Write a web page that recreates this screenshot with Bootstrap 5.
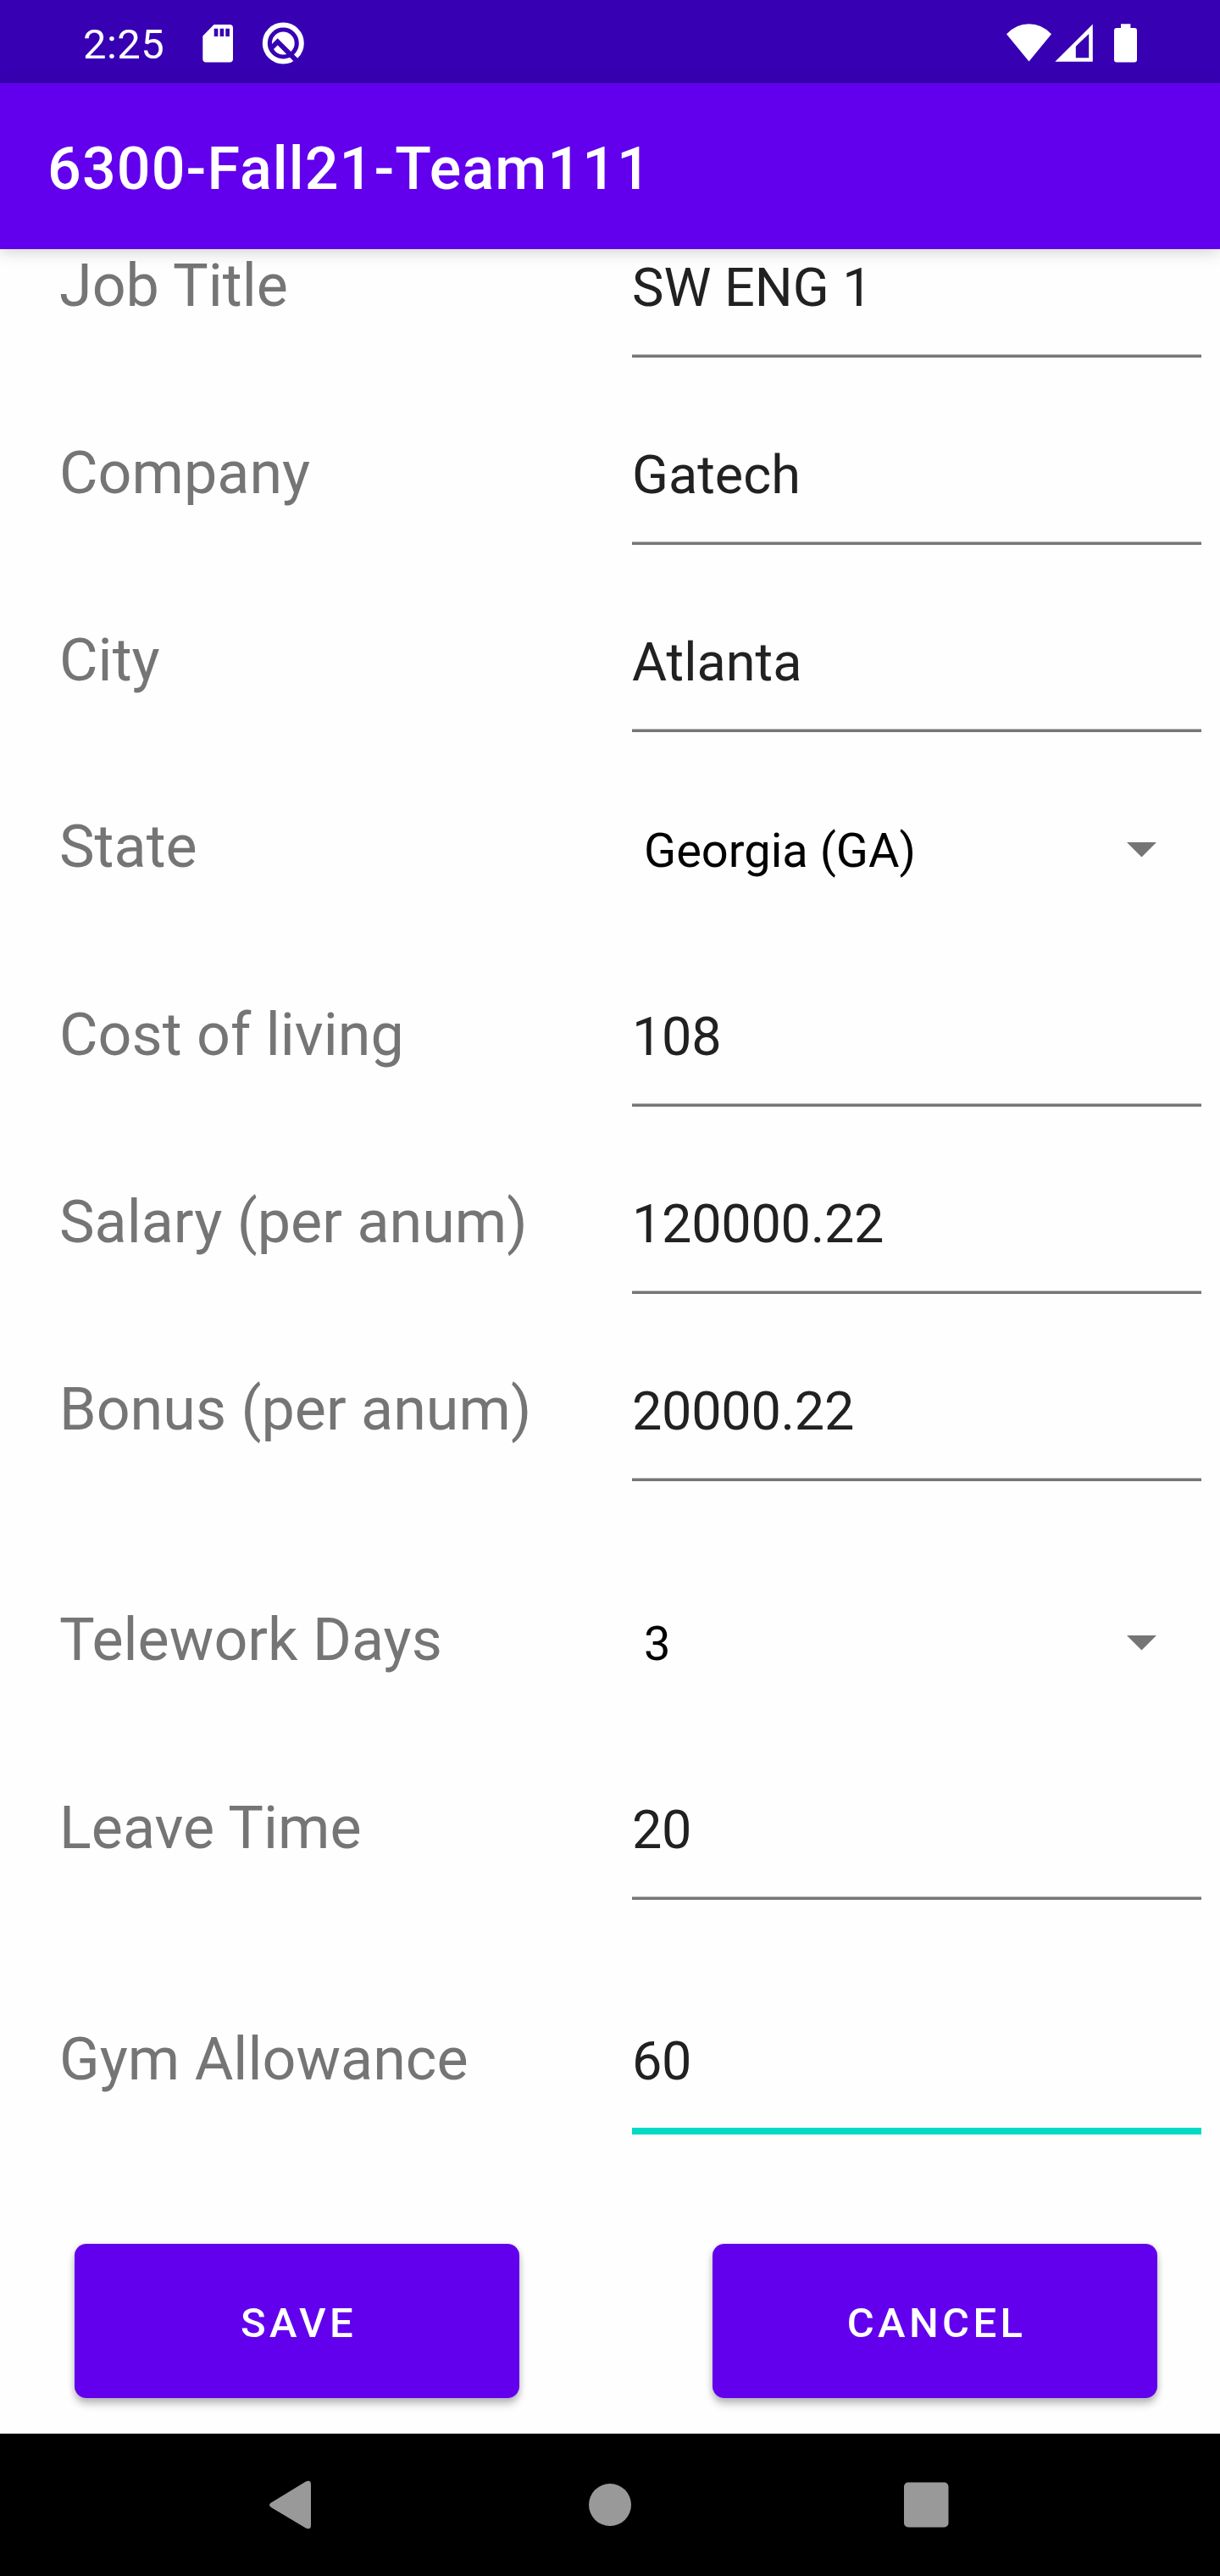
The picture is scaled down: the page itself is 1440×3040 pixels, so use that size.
<!DOCTYPE html>
<html lang="en">
<head>
<meta charset="utf-8">
<meta name="viewport" content="width=device-width, initial-scale=1">
<title>6300-Fall21-Team111</title>
<link href="https://cdn.jsdelivr.net/npm/bootstrap@5.3.0/dist/css/bootstrap.min.css" rel="stylesheet">
<style>
  body { font-family: Roboto, sans-serif; background: #fefefe; }
  .screen { width: 1440px; height: 3040px; }
  .status-bar { height: 98px; background: #3700b3; padding: 0 98px; color: #fff; }
  .clock { font-size: 49px; line-height: 58px; padding-top: 8px; width: 141px; letter-spacing: .4px; }
  .notice-icon { margin-left: 34px; }
  .app-bar { height: 196px; background: #6200ee; padding: 5px 56px 0; z-index: 2; box-shadow: 0 3px 18px rgba(0,0,0,.18); }
  .app-title { font-size: 70px; line-height: 82px; font-weight: 500; letter-spacing: 1.1px; }
  .offer-form { margin-top: -93px; }
  .field { height: 221px; --bs-gutter-x: 0; padding: 0 22px 0 70px; }
  .field-wide { height: 272px; }
  .field-leave { height: 222px; }
  .field-last { height: 277px; }
  .field-state { padding-bottom: 1px; }
  .caption { width: 676px; font-size: 70px; line-height: 82px; padding-bottom: 44px; color: #757575; letter-spacing: .03px; }
  .field-last .caption { padding-bottom: 48px; }
  .entry { font-size: 63px; line-height: 73px; color: #212121; padding-bottom: 43px; border-bottom: 3px solid #767676;
    background: linear-gradient(#b5b5b5, #b5b5b5) bottom / 100% 1px no-repeat; }
  .entry-number { letter-spacing: -.3px; }
  .entry-active { border-bottom: 8px solid #03dac5; padding-bottom: 42px; background: none; }
  .picker { font-size: 56px; line-height: 66px; color: #000; padding: 0 53px 47px 14px; }
  .picker svg { margin-bottom: 2px; }
  .actions { padding: 129px 74px 0 88px; }
  .btn-raised { width: 525px; height: 182px; border: 0; border-radius: 14px; background: #6200ee; color: #fff; font-size: 49px; font-weight: 500; letter-spacing: .0892857em; padding: 5px 0 0 4px; box-shadow: 0 7px 10px rgba(0,0,0,.24), 0 1px 7px rgba(0,0,0,.12); }
  .nav-keys { height: 168px; background: #000; }
</style>
</head>
<body>
<div class="screen d-flex flex-column overflow-hidden">
  <header class="status-bar d-flex flex-shrink-0 align-items-center">
    <span class="clock">2:25</span>
    <svg width="36" height="98" viewBox="239 0 36 98" fill="#fff"><path fill-rule="evenodd" d="M252.5 29H271Q275 29 275 33V69.5Q275 73.5 271 73.5H243.3Q239.3 73.5 239.3 69.5V42.5ZM252.7 33.7V43H257.3V33.7ZM259.6 33.7V43H264.2V33.7ZM266.3 33.7V43H270.9V33.7Z"/></svg>
    <svg class="notice-icon" width="51" height="98" viewBox="309 0 51 98" fill="none"><circle cx="334.3" cy="51" r="21.500" stroke="#fff" stroke-width="6"/><circle cx="334.3" cy="51" r="13.4" fill="#fff"/><path d="M319 58 327.700 49.300 352.500 74.100" stroke="#3700b3" stroke-width="5.800"/></svg>
    <svg class="ms-auto" width="154" height="98" viewBox="1188 0 154 98" fill="#fff"><path d="M1188 40.3Q1199 28.3 1214.5 28.3T1241 40.3L1214.5 72.5Z"/><path fill-rule="evenodd" d="M1245.3 72.7H1289.8V28.5ZM1269.8 68.2V54.8L1285.2 40V68.2Z"/><path d="M1323 28.2H1334.4V33H1339Q1342 33 1342 36V70.6Q1342 73.6 1339 73.6H1318Q1315 73.6 1315 70.6V36Q1315 33 1318 33H1323Z"/></svg>
  </header>
  <div class="app-bar navbar flex-shrink-0 position-relative">
    <h1 class="app-title text-white m-0">6300-Fall21-Team111</h1>
  </div>
  <main class="flex-grow-1 overflow-hidden">
    <div class="offer-form">
      <div class="field row align-items-end"><div class="caption col-auto">Job Title</div><div class="entry col">SW ENG 1</div></div>
      <div class="field row align-items-end"><div class="caption col-auto">Company</div><div class="entry col">Gatech</div></div>
      <div class="field row align-items-end"><div class="caption col-auto">City</div><div class="entry col">Atlanta</div></div>
      <div class="field field-state row align-items-end"><div class="caption col-auto">State</div><div class="picker col d-flex justify-content-between align-items-center"><span>Georgia (GA)</span><svg width="35" height="18" viewBox="0 0 35 18"><path d="M0 0H35L17.5 17.5Z" fill="#757575"/></svg></div></div>
      <div class="field row align-items-end"><div class="caption col-auto">Cost of living</div><div class="entry entry-number col">108</div></div>
      <div class="field row align-items-end"><div class="caption col-auto">Salary (per anum)</div><div class="entry entry-number col">120000.22</div></div>
      <div class="field row align-items-end"><div class="caption col-auto">Bonus (per anum)</div><div class="entry entry-number col">20000.22</div></div>
      <div class="field field-wide row align-items-end"><div class="caption col-auto">Telework Days</div><div class="picker col d-flex justify-content-between align-items-center"><span>3</span><svg width="35" height="18" viewBox="0 0 35 18"><path d="M0 0H35L17.5 17.5Z" fill="#757575"/></svg></div></div>
      <div class="field field-leave row align-items-end"><div class="caption col-auto">Leave Time</div><div class="entry entry-number col">20</div></div>
      <div class="field field-last row align-items-end"><div class="caption col-auto">Gym Allowance</div><div class="entry entry-number entry-active col">60</div></div>
      <div class="actions d-flex justify-content-between">
        <button type="button" class="btn btn-raised">SAVE</button>
        <button type="button" class="btn btn-raised">CANCEL</button>
      </div>
    </div>
  </main>
  <footer class="nav-keys flex-shrink-0">
    <svg class="d-block" width="1440" height="168" fill="#999"><path d="M320 81.5 361 56.5Q367 54 367 60V108Q367 114 361 111.500L320 87Q316 84 320 81.5Z"/><circle cx="720" cy="84" r="25"/><rect x="1067" y="57.500" width="52.500" height="53" rx="5"/></svg>
  </footer>
</div>
<script src="https://cdn.jsdelivr.net/npm/bootstrap@5.3.0/dist/js/bootstrap.bundle.min.js"></script>
</body>
</html>
